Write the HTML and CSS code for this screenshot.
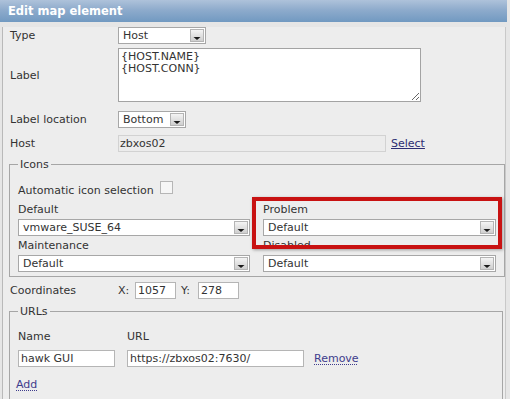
FILE: index.html
```html
<!DOCTYPE html>
<html lang="en">
<head>
    <meta charset="UTF-8">
    <title>Edit map element</title>
    <link rel="stylesheet" href="styles.css">
</head>
<body>
    <div class="dialog">
        <div class="dialog-title">Edit map element</div>
        <div class="dialog-body">
            <div class="form-row row-type">
                <span class="form-label">Type</span>
                <div class="select select-type">
                    <span class="select-text">Host</span>
                    <span class="select-btn"><svg width="14" height="13" viewBox="0 0 14 13"><polygon points="3.5,8 10.5,8 7,11" fill="#1a1a1a"/></svg></span>
                </div>
            </div>

            <div class="form-row row-label">
                <span class="form-label">Label</span>
                <textarea class="label-area" readonly>{HOST.NAME}
{HOST.CONN}</textarea>
            </div>

            <div class="form-row row-location">
                <span class="form-label">Label location</span>
                <div class="select select-location">
                    <span class="select-text">Bottom</span>
                    <span class="select-btn"><svg width="14" height="13" viewBox="0 0 14 13"><polygon points="3.5,8 10.5,8 7,11" fill="#1a1a1a"/></svg></span>
                </div>
            </div>

            <div class="form-row row-host">
                <span class="form-label">Host</span>
                <div class="text-input host-input disabled">zbxos02</div>
                <a href="#" class="link link-select">Select</a>
            </div>

            <fieldset class="group icons-group">
                <legend>Icons</legend>
                <div class="auto-row">
                    <span class="auto-text">Automatic icon selection</span>
                    <span class="checkbox"></span>
                </div>
                <div class="icons-grid">
                    <div class="icon-field">
                        <span class="field-caption">Default</span>
                        <div class="select select-wide">
                            <span class="select-text">vmware_SUSE_64</span>
                            <span class="select-btn"><svg width="14" height="13" viewBox="0 0 14 13"><polygon points="3.5,8 10.5,8 7,11" fill="#1a1a1a"/></svg></span>
                        </div>
                    </div>
                    <div class="icon-field field-problem">
                        <span class="field-caption">Problem</span>
                        <div class="select select-wide">
                            <span class="select-text">Default</span>
                            <span class="select-btn"><svg width="14" height="13" viewBox="0 0 14 13"><polygon points="3.5,8 10.5,8 7,11" fill="#1a1a1a"/></svg></span>
                        </div>
                        <!-- annotation box drawn over the Problem selector -->
                        <div class="highlight-box"></div>
                    </div>
                    <div class="icon-field">
                        <span class="field-caption">Maintenance</span>
                        <div class="select select-wide">
                            <span class="select-text">Default</span>
                            <span class="select-btn"><svg width="14" height="13" viewBox="0 0 14 13"><polygon points="3.5,8 10.5,8 7,11" fill="#1a1a1a"/></svg></span>
                        </div>
                    </div>
                    <div class="icon-field">
                        <span class="field-caption">Disabled</span>
                        <div class="select select-wide">
                            <span class="select-text">Default</span>
                            <span class="select-btn"><svg width="14" height="13" viewBox="0 0 14 13"><polygon points="3.5,8 10.5,8 7,11" fill="#1a1a1a"/></svg></span>
                        </div>
                    </div>
                </div>
            </fieldset>

            <div class="form-row row-coords">
                <span class="form-label">Coordinates</span>
                <span class="coord-label">X:</span>
                <div class="text-input coord-input">1057</div>
                <span class="coord-label coord-y">Y:</span>
                <div class="text-input coord-input">278</div>
            </div>

            <fieldset class="group urls-group">
                <legend>URLs</legend>
                <div class="urls-grid">
                    <span class="field-caption">Name</span>
                    <span class="field-caption">URL</span>
                    <span></span>
                    <div class="text-input url-name">hawk GUI</div>
                    <div class="text-input url-value">https://zbxos02:7630/</div>
                    <a href="#" class="link link-dotted">Remove</a>
                </div>
                <a href="#" class="link link-dotted link-add">Add</a>
            </fieldset>
        </div>
    </div>
</body>
</html>
```

FILE: styles.css
```css
* {
    margin: 0;
    padding: 0;
    box-sizing: border-box;
}

body {
    background-color: #e6e6e6;
    font-family: "DejaVu Sans", Verdana, sans-serif;
    font-size: 11px;
    color: #333;
    overflow: hidden;
}

.dialog {
    width: 507px;
    height: 399px;
}

.dialog-title {
    height: 22px;
    padding-left: 8px;
    line-height: 22px;
    font-size: 11.5px;
    font-weight: bold;
    color: #fff;
    background: linear-gradient(to bottom, #aec2da 0%, #8eabcc 45%, #7199c1 100%);
}

.dialog-body {
    height: 377px;
    margin-left: 2px;
    margin-right: 1px;
    padding-left: 6px;
    border-left: 1px solid #b9b9b9;
    border-right: 1px solid #c9c9c9;
    background-color: #ededed;
}

.form-row {
    display: flex;
    align-items: center;
}

.form-label {
    width: 109px;
    padding-left: 1px;
    flex-shrink: 0;
}

.row-type {
    margin-top: 5px;
}

.row-label {
    margin-top: 4px;
}

.row-location {
    margin-top: 9px;
}

.row-host {
    margin-top: 7px;
}

/* fake select boxes */
.select {
    display: flex;
    align-items: center;
    height: 17px;
    background-color: #fff;
    border: 1px solid #a7a7a7;
}

.select-text {
    flex: 1;
    padding-left: 4px;
    line-height: 15px;
    white-space: nowrap;
}

.select-btn {
    display: block;
    width: 14px;
    height: 13px;
    margin-right: 1px;
    background: linear-gradient(to bottom, #f4f4f4, #cfcfcf);
    border: 1px solid #b4b4b4;
}

.select-btn svg {
    display: block;
    margin: -1px 0 0 -1px;
}

.select-type {
    width: 88px;
}

.select-location {
    width: 68px;
}

.select-wide {
    width: 100%;
    height: 17px;
}

.label-area {
    width: 303px;
    height: 54px;
    padding: 2px 2px;
    border: 1px solid #a3a3a3;
    font-family: "DejaVu Sans", Verdana, sans-serif;
    font-size: 11px;
    line-height: 12px;
    color: #333;
    background-color: #fff;
    resize: both;
    outline: none;
}

.text-input {
    height: 17px;
    padding-left: 2px;
    line-height: 15px;
    border: 1px solid #b5b5b5;
    background-color: #fff;
    white-space: nowrap;
}

.text-input.disabled {
    background-color: #ececec;
    border-color: #d2d2d2;
    padding-left: 1px;
}

.host-input {
    width: 268px;
}

.link {
    color: #2d2d72;
}

.link-select {
    margin-left: 5px;
    text-decoration: underline;
}

.link-dotted {
    color: #3e3c8c;
    text-decoration: underline dotted;
    text-underline-offset: 2px;
}

.group {
    margin-top: 6px;
    margin-right: 2px;
    padding: 0 8px;
    border: 1px solid #a6a6a6;
}

.group legend {
    padding: 0 2px;
    line-height: 13px;
}

.icons-group {
    height: 119px;
}

.auto-row {
    display: flex;
    align-items: flex-start;
    margin-top: 10px;
    height: 16px;
}

.auto-text {
    margin-top: 3px;
    line-height: 13px;
}

.checkbox {
    width: 13px;
    height: 13px;
    margin-left: 6px;
    border: 1px solid #b6b6b6;
    background-color: #f6f6f6;
}

.icons-grid {
    display: grid;
    grid-template-columns: 232px 233px;
    column-gap: 13px;
    row-gap: 3px;
    margin-top: 6px;
}

.icon-field {
    display: flex;
    flex-direction: column;
}

.field-problem {
    position: relative;
}

.field-caption {
    line-height: 13px;
    margin-bottom: 3px;
}

.row-coords {
    margin-top: 5px;
}

.coord-label {
    width: 17px;
}

.coord-input {
    width: 41px;
}

.coord-y {
    margin-left: 5px;
}

.urls-group {
    margin-top: 6px;
    height: 110px;
    border-bottom: none;
}

.urls-grid {
    display: grid;
    grid-template-columns: 97px 177px auto;
    column-gap: 12px;
    align-items: center;
    margin-top: 12px;
}

.urls-grid .field-caption {
    margin-bottom: 7px;
}

.url-value {
    width: 177px;
}

.link-dotted:last-child {
    margin-left: -2px;
}

.link-add {
    display: inline-block;
    margin-top: 11px;
    margin-left: 0;
}

.highlight-box {
    position: absolute;
    left: -11px;
    top: -6px;
    width: 250px;
    height: 52px;
    border: 4px solid #c81212;
    box-shadow: 1px 1px 3px rgba(0, 0, 0, 0.35);
}
```
